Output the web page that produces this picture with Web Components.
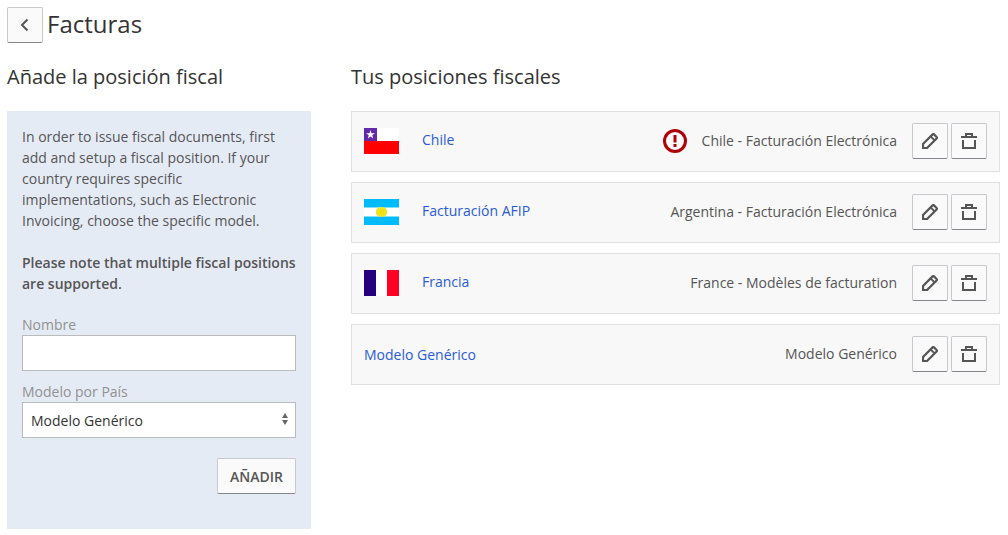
<!DOCTYPE html>
<html lang="es">
<head>
<meta charset="utf-8">
<meta name="viewport" content="width=device-width, initial-scale=1">
<title>Facturas</title>
<style>
    body {
        margin: 0;
        padding: 7px 8px 6px 7px;
        background: #fff;
        color: #555;
        font: 14px/21px "Open Sans", "Noto Sans", sans-serif;
    }
</style>
</head>
<body>
<invoice-page></invoice-page>

<script>
const ICONS = {
    back: '<path d="M10.500 2.500 5 8l5.500 5.500" stroke-width="2"/>',
    edit: '<path d="M1 15v-4L10.600 1.400a1 1 0 0 1 1.400 0l2.600 2.600a1 1 0 0 1 0 1.400L5 15z" stroke-width="2.200"/><path d="m8.600 3.400 4 4" stroke-width="2"/>',
    remove: '<path d="M0 4h16M2 7v8h12V7" stroke-width="2"/><path d="M5 3V1h6v2" stroke-width="2"/>'
};

const FLAGS = {
    cl: `<path fill="#fff" d="M0 0h35v13H0z"/>
        <path fill="#f00" d="M0 13h35v13H0z"/>
        <path fill="#6329ac" d="M0 0h13v13H0z"/>
        <path fill="#fff" d="m6.500 2 1 3.200H11L8.200 7.200l1 3.200-2.700-2-2.700 2 1-3.200L2 5.200h3.500z"/>`,
    ar: `<path fill="#00bcff" d="M0 0h35v26H0z"/>
        <path fill="#fff" d="M0 8.500h35v9H0z"/>
        <ellipse cx="17.500" cy="13" rx="5.800" ry="5" fill="#f5ea30"/>
        <ellipse cx="17.500" cy="13" rx="4.500" ry="4" fill="none" stroke="#eadc10" stroke-width="2" stroke-dasharray="1 1"/>
        <ellipse cx="17.500" cy="13" rx="3" ry="2.600" fill="#f0de10"/>`,
    fr: `<path fill="#24007f" d="M0 0h12v26H0z"/>
        <path fill="#fff" d="M12 0h11v26H12z"/>
        <path fill="#ff0024" d="M23 0h12v26H23z"/>`
};

class ActionButton extends HTMLElement {
    constructor() {
        super();
        this.attachShadow({mode: 'open'});

        const icon = this.getAttribute('icon');
        const label = this.getAttribute('label');

        this.shadowRoot.innerHTML = `
            <style>
                :host {
                    display: inline-flex;
                    flex: none;
                }

                button {
                    box-sizing: border-box;
                    display: flex;
                    align-items: center;
                    justify-content: center;
                    min-width: 36px;
                    height: 36px;
                    padding: 0 ${icon ? 0 : 12}px;
                    border: 1px solid #c8c8cd;
                    border-bottom-color: #85858c;
                    border-radius: 2px;
                    background: #fafafa;
                    color: #555;
                    font: inherit;
                    font-weight: 600;
                    text-transform: uppercase;
                    cursor: pointer;
                }

                button:hover {
                    background: #fff;
                }

                svg {
                    display: block;
                    fill: none;
                    stroke: currentColor;
                }
            </style>
            <button type="button" ${label ? `aria-label="${label}"` : ''}>
                ${icon ? `<svg width="16" height="16" viewBox="0 0 16 16" aria-hidden="true">${ICONS[icon]}</svg>` : '<slot></slot>'}
            </button>
        `;
    }
}

class FiscalForm extends HTMLElement {
    constructor() {
        super();
        this.attachShadow({mode: 'open'});

        this.shadowRoot.innerHTML = `
            <style>
                :host {
                    display: block;
                    padding: 15px 15px 35px;
                    background: #e5ebf5;
                }

                form {
                    display: flex;
                    flex-direction: column;
                    gap: 10px;
                    margin-top: 20px;
                }

                label {
                    display: block;
                    color: #919191;
                }

                input, select {
                    box-sizing: border-box;
                    display: block;
                    width: 100%;
                    height: 36px;
                    margin: 0;
                    padding: 0 8px;
                    border: 1px solid #bbb;
                    border-radius: 0;
                    background: #fff;
                    color: #333;
                    font: inherit;
                }

                select {
                    appearance: none;
                }

                .select {
                    position: relative;
                }

                .select svg {
                    position: absolute;
                    top: 11px;
                    right: 8px;
                    fill: #666;
                    pointer-events: none;
                }

                .actions {
                    display: flex;
                    justify-content: flex-end;
                    margin-top: 10px;
                }
            </style>
            <slot></slot>
            <form>
                <div>
                    <label for="name">Nombre</label>
                    <input id="name" type="text">
                </div>
                <div>
                    <label for="model">Modelo por País</label>
                    <div class="select">
                        <select id="model">
                            <option>Modelo Genérico</option>
                            <option>Argentina - Facturación Electrónica</option>
                            <option>Chile - Facturación Electrónica</option>
                            <option>France - Modèles de facturation</option>
                        </select>
                        <svg width="6" height="12" viewBox="0 0 6 12" aria-hidden="true"><path d="M3 0l3 5H0zM0 7h6l-3 5z"/></svg>
                    </div>
                </div>
                <div class="actions">
                    <action-button>Añadir</action-button>
                </div>
            </form>
        `;
    }
}

class FiscalPosition extends HTMLElement {
    constructor() {
        super();
        this.attachShadow({mode: 'open'});

        const flag = FLAGS[this.getAttribute('flag')];

        this.shadowRoot.innerHTML = `
            <style>
                :host {
                    display: flex;
                    align-items: center;
                    padding: 11px 12px 12px;
                    border: 1px solid #e0e0e0;
                    background: #f8f8f8;
                }

                svg {
                    display: block;
                    flex: none;
                }

                .flag {
                    margin-right: 23px;
                }

                a {
                    color: #2a5bd7;
                    text-decoration: none;
                }

                a:hover {
                    text-decoration: underline;
                }

                .flag + a {
                    padding-bottom: 3px;
                }

                .model {
                    display: flex;
                    align-items: center;
                    gap: 15px;
                    margin-left: auto;
                }

                ::slotted([slot="model"]) {
                    padding-bottom: 2px;
                }

                .buttons {
                    display: flex;
                    gap: 3px;
                    margin-left: 15px;
                }
            </style>
            ${flag ? `<svg class="flag" width="35" height="26" viewBox="0 0 35 26" aria-hidden="true">${flag}</svg>` : ''}
            <a href="#"><slot></slot></a>
            <div class="model">
                ${this.hasAttribute('alert') ? `
                    <svg width="24" height="24" viewBox="0 0 24 24" aria-hidden="true">
                        <circle cx="12" cy="12" r="10.500" fill="#fbfbfb" stroke="#b00008" stroke-width="3"/>
                        <path fill="#b00008" d="M10.500 6h3v7.500h-3zM10.500 15h3v3h-3z"/>
                    </svg>` : ''}
                <slot name="model"></slot>
            </div>
            <div class="buttons">
                <action-button icon="edit" label="Editar"></action-button>
                <action-button icon="remove" label="Eliminar"></action-button>
            </div>
        `;
    }
}

class InvoicePage extends HTMLElement {
    constructor() {
        super();
        this.attachShadow({mode: 'open'});

        this.shadowRoot.innerHTML = `
            <style>
                :host {
                    display: block;
                }

                header {
                    display: flex;
                    align-items: flex-start;
                    gap: 4px;
                    margin-bottom: 20px;
                }

                h1, h2 {
                    margin: 0;
                    color: #333;
                    font-weight: 400;
                }

                h1 {
                    font-size: 24px;
                    line-height: 34px;
                }

                h2 {
                    margin-bottom: 20px;
                    font-size: 20px;
                    line-height: 28px;
                }

                main {
                    display: grid;
                    grid-template-columns: 304px minmax(0, 1fr);
                    align-items: start;
                    gap: 40px;
                }

                p {
                    margin: 0 0 21px;
                }

                p:last-child {
                    margin: 0;
                    font-weight: 600;
                }

                .list {
                    display: grid;
                    gap: 10px;
                }

                @media (max-width: 760px) {
                    main {
                        grid-template-columns: minmax(0, 1fr);
                    }
                }
            </style>
            <header>
                <action-button icon="back" label="Volver"></action-button>
                <h1>Facturas</h1>
            </header>
            <main>
                <section>
                    <h2>Añade la posición fiscal</h2>
                    <fiscal-form>
                        <p>In order to issue fiscal documents, first add and setup a fiscal position. If your country requires specific implementations, such as Electronic Invoicing, choose the specific model.</p>
                        <p>Please note that multiple fiscal positions are supported.</p>
                    </fiscal-form>
                </section>
                <section>
                    <h2>Tus posiciones fiscales</h2>
                    <div class="list">
                        <fiscal-position flag="cl" alert>Chile<span slot="model">Chile - Facturación Electrónica</span></fiscal-position>
                        <fiscal-position flag="ar">Facturación AFIP<span slot="model">Argentina - Facturación Electrónica</span></fiscal-position>
                        <fiscal-position flag="fr">Francia<span slot="model">France - Modèles de facturation</span></fiscal-position>
                        <fiscal-position>Modelo Genérico<span slot="model">Modelo Genérico</span></fiscal-position>
                    </div>
                </section>
            </main>
        `;
    }
}

customElements.define('action-button', ActionButton);
customElements.define('fiscal-form', FiscalForm);
customElements.define('fiscal-position', FiscalPosition);
customElements.define('invoice-page', InvoicePage);
</script>
</body>
</html>
